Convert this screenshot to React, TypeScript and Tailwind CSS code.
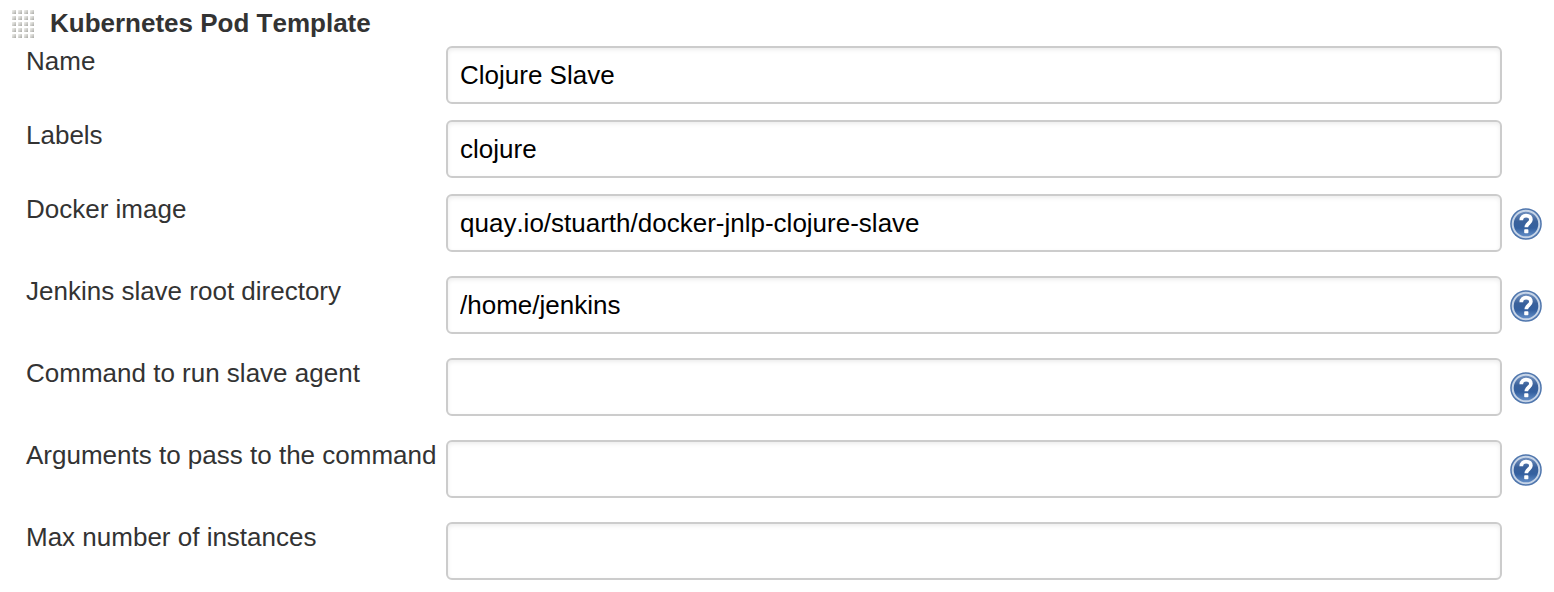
type Field = { label: string; value: string; help?: boolean; rowClass: string };

const fields: Field[] = [
  { label: "Name", value: "Clojure Slave", rowClass: "h-[74px]" },
  { label: "Labels", value: "clojure", rowClass: "h-[74px]" },
  { label: "Docker image", value: "quay.io/stuarth/docker-jnlp-clojure-slave", help: true, rowClass: "h-[82px]" },
  { label: "Jenkins slave root directory", value: "/home/jenkins", help: true, rowClass: "h-[82px]" },
  { label: "Command to run slave agent", value: "", help: true, rowClass: "h-[82px]" },
  { label: "Arguments to pass to the command", value: "", help: true, rowClass: "h-[82px]" },
  { label: "Max number of instances", value: "", rowClass: "h-[70px]" },
];

function DragHandle() {
  const dots = [];
  for (let row = 0; row < 5; row++) {
    for (let col = 0; col < 4; col++) {
      dots.push(
        <g key={`${row}-${col}`} transform={`translate(${col * 6} ${row * 6})`}>
          <rect width="4" height="4" fill="url(#grip)" />
        </g>,
      );
    }
  }
  return (
    <svg width="22" height="28" viewBox="0 0 22 28" className="mt-[10px] shrink-0" aria-hidden="true">
      <defs>
        <linearGradient id="grip" x1="0" y1="0" x2="1" y2="1">
          <stop offset="0.1" stopColor="#ecece9" />
          <stop offset="0.5" stopColor="#d2d2ce" />
          <stop offset="0.9" stopColor="#b0b0ac" />
        </linearGradient>
      </defs>
      {dots}
    </svg>
  );
}

function HelpIcon() {
  return (
    <svg width="32" height="32" viewBox="0 0 32 32" className="mt-[14px] shrink-0" aria-hidden="true">
      <defs>
        <linearGradient id="help" x1="0" y1="0" x2="0" y2="1">
          <stop offset="0" stopColor="#7695c2" />
          <stop offset="0.4" stopColor="#3a619b" />
          <stop offset="0.65" stopColor="#34609f" />
          <stop offset="1" stopColor="#6792cb" />
        </linearGradient>
      </defs>
      <circle cx="16" cy="16" r="15.8" fill="#4f76ad" />
      <circle cx="16" cy="16" r="13.3" fill="url(#help)" stroke="#c6d4e7" strokeWidth="2" />
      <path
        d="M11.3 12.2 C11.3 9.2 13.2 7.6 16.1 7.6 C19.1 7.6 20.9 9.2 20.9 11.8 C20.9 15.2 16.3 15.4 16.3 19.2"
        fill="none"
        stroke="#fff"
        strokeWidth="3.7"
      />
      <rect x="14.2" y="21.3" width="4.2" height="3.9" rx="0.8" fill="#fff" />
    </svg>
  );
}

export default function App() {
  return (
    <form className="h-[592px] w-[1554px] overflow-hidden bg-white font-['Liberation_Sans',Arial,sans-serif] text-[26px] text-[#333]">
      <header className="flex h-[46px] items-start pl-3">
        <DragHandle />
        <h2 className="ml-4 pt-2 leading-[30px] font-bold whitespace-nowrap [font-kerning:none]">
          Kubernetes Pod Template
        </h2>
      </header>
      {fields.map(({ label, value, help, rowClass }) => (
        <div key={label} className={`flex items-start pl-[26px] ${rowClass}`}>
          <label htmlFor={label} className="w-[420px] shrink-0 leading-[30px] whitespace-nowrap">
            {label}
          </label>
          <input
            id={label}
            type="text"
            defaultValue={value}
            className="mr-2 h-[58px] w-[1056px] shrink-0 rounded-[6px] border-2 border-[#ccc] bg-white px-3 text-black shadow-[inset_0_2px_4px_rgba(0,0,0,0.075)] outline-none [font-kerning:none]"
          />
          {help && <HelpIcon />}
        </div>
      ))}
    </form>
  );
}
